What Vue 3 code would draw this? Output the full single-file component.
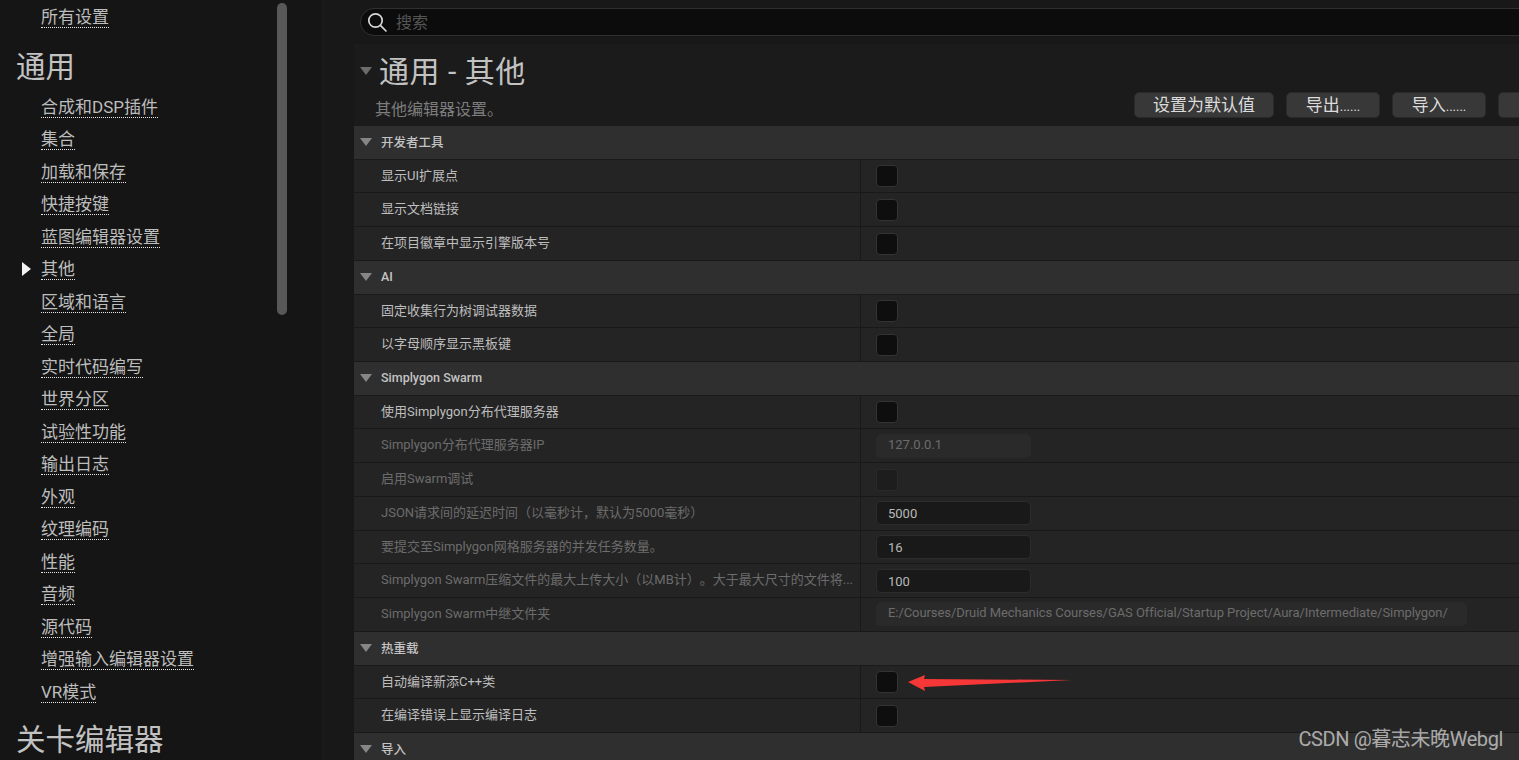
<script setup>
const nav = ['合成和DSP插件','集合','加载和保存','快捷按键','蓝图编辑器设置','其他','区域和语言','全局','实时代码编写','世界分区','试验性功能','输出日志','外观','纹理编码','性能','音频','源代码','增强输入编辑器设置','VR模式']
const sections = [
  { title: '开发者工具', rows: [
    { label: '显示UI扩展点', type: 'check' },
    { label: '显示文档链接', type: 'check' },
    { label: '在项目徽章中显示引擎版本号', type: 'check' }
  ]},
  { title: 'AI', rows: [
    { label: '固定收集行为树调试器数据', type: 'check' },
    { label: '以字母顺序显示黑板键', type: 'check' }
  ]},
  { title: 'Simplygon Swarm', rows: [
    { label: '使用Simplygon分布代理服务器', type: 'check' },
    { label: 'Simplygon分布代理服务器IP', type: 'text', value: '127.0.0.1', dim: true, off: true },
    { label: '启用Swarm调试', type: 'check', dim: true, off: true },
    { label: 'JSON请求间的延迟时间（以毫秒计，默认为5000毫秒）', type: 'text', value: '5000', dim: true },
    { label: '要提交至Simplygon网格服务器的并发任务数量。', type: 'text', value: '16', dim: true },
    { label: 'Simplygon Swarm压缩文件的最大上传大小（以MB计）。大于最大尺寸的文件将...', type: 'text', value: '100', dim: true },
    { label: 'Simplygon Swarm中继文件夹', type: 'text', value: 'E:/Courses/Druid Mechanics Courses/GAS Official/Startup Project/Aura/Intermediate/Simplygon/', dim: true, off: true, wide: true }
  ]},
  { title: '热重载', rows: [
    { label: '自动编译新添C++类', type: 'check' },
    { label: '在编译错误上显示编译日志', type: 'check' }
  ]},
  { title: '导入', rows: [] }
]
</script>

<template>
  <div class="app">
    <aside class="side">
      <div class="side-inner">
        <a class="nav-link first"><span>所有设置</span></a>
        <h2 class="group">通用</h2>
        <a v-for="n in nav" :key="n" class="nav-link" :class="{ active: n === '其他' }"><span>{{ n }}</span></a>
        <h2 class="group last">关卡编辑器</h2>
      </div>
      <div class="scroll"></div>
    </aside>
    <main class="main">
      <div class="search-wrap">
        <div class="search">
          <svg class="mag" width="22" height="22" viewBox="0 0 22 22" fill="none" stroke="#d8d8d8" stroke-width="1.7">
            <circle cx="9.5" cy="9.5" r="6.7"/>
            <path d="M14.4 14.4 20 20" stroke-linecap="round"/>
          </svg>
          <span class="ph">搜索</span>
        </div>
      </div>
      <div class="panel">
        <header class="head">
          <div class="head-left">
            <div class="title-line">
              <i class="tri big"></i>
              <h1>通用 - 其他</h1>
            </div>
            <p class="sub">其他编辑器设置。</p>
          </div>
          <div class="btns">
            <button class="b1">设置为默认值</button>
            <button class="b2">导出<small>......</small></button>
            <button class="b2">导入<small>......</small></button>
            <button class="b2">重置</button>
          </div>
        </header>
        <section v-for="s in sections" :key="s.title">
          <div class="sec"><i class="tri"></i><b>{{ s.title }}</b></div>
          <div v-for="r in s.rows" :key="r.label" class="row">
            <div class="lbl" :class="{ dim: r.dim }">{{ r.label }}</div>
            <div class="val">
              <span v-if="r.type === 'check'" class="chk" :class="{ off: r.off }"></span>
              <span v-else class="inp" :class="{ off: r.off, wide: r.wide }">{{ r.value }}</span>
            </div>
          </div>
        </section>
      </div>
    </main>
    <svg class="arrow" width="170" height="20" viewBox="0 0 170 20">
      <polygon points="0,8 17,1 16,5 164,6 16,13 17,17" fill="#f63737"/>
    </svg>
    <div class="mark">CSDN @暮志未晚Webgl</div>
  </div>
</template>

<style>
html, body { margin: 0; background: #151515; overflow: hidden; }
</style>

<style scoped>
.app {
  position: relative;
  display: flex;
  width: 1519px;
  height: 760px;
  overflow: hidden;
  background: #181818;
  font-family: Roboto, "Noto Sans CJK SC", sans-serif;
  text-spacing-trim: space-all;
}
.side {
  position: relative;
  width: 322px;
  flex: none;
  background: #151515;
  border-right: 1px solid #1b1b1b;
}
.side-inner { padding-left: 41px; }
.nav-link {
  position: relative;
  display: block;
  height: 32.5px;
  line-height: 32px;
  font-size: 17px;
  color: #bdbdbd;
}
.nav-link.first { margin-top: 1px; }
.nav-link span {
  display: inline-block;
  line-height: 19px;
  border-bottom: 1px dotted #e8e8e8;
}
.nav-link.active::before {
  content: '';
  position: absolute;
  left: -19px;
  top: 9px;
  border-left: 9px solid #f2f2f2;
  border-top: 7px solid transparent;
  border-bottom: 7px solid transparent;
}
.group {
  margin: 0 0 0 -25px;
  height: 49px;
  line-height: 50px;
  padding-top: 8px;
  font-size: 29.5px;
  font-weight: 400;
  color: #c2c2c2;
}
.group.last { padding-top: 7px; }
.scroll {
  position: absolute;
  left: 277px;
  top: 3px;
  width: 10px;
  height: 312px;
  border-radius: 5px;
  background: #585858;
}
.main {
  margin-left: 31px;
  flex: 1;
  min-width: 0;
  overflow: hidden;
}
.search-wrap {
  height: 44px;
  margin-left: -33px;
  background: #181818;
  padding: 8px 0 0 39px;
  box-sizing: border-box;
}
.search {
  display: flex;
  align-items: center;
  height: 28px;
  width: 1300px;
  box-sizing: border-box;
  border: 1px solid #303030;
  border-radius: 14px;
  background: #0c0c0c;
  padding-left: 5px;
}
.mag { flex: none; }
.ph {
  margin-left: 8px;
  margin-bottom: 2px;
  font-size: 16px;
  color: #555;
}
.panel { width: 1300px; }
.head {
  display: flex;
  height: 82px;
  background: #1b1b1b;
}
.head-left { width: 780px; flex: none; }
.title-line {
  display: flex;
  align-items: center;
  height: 54px;
}
h1 {
  margin: -4px 0 0 7px;
  font-size: 30px;
  font-weight: 400;
  color: #c2c2c2;
  letter-spacing: 0.5px;
}
.tri {
  display: block;
  width: 0;
  height: 0;
  margin-left: 6px;
  border-top: 8px solid #868686;
  border-left: 6.5px solid transparent;
  border-right: 6.5px solid transparent;
}
.tri.big { border-top-color: #6c6c6c; }
.sub {
  margin: 1px 0 0 21px;
  font-size: 16px;
  line-height: 22px;
  color: #7d7d7d;
}
.btns {
  display: flex;
  gap: 12px;
  padding-top: 48px;
}
button {
  flex: none;
  height: 26px;
  padding: 0;
  border: 1px solid #2a2a2a;
  border-radius: 5px;
  background: #383838;
  color: #dcdcdc;
  font: 400 17px/24px Roboto, "Noto Sans CJK SC", sans-serif;
}
button small { font-size: 13px; }
.b1 { width: 140px; }
.b2 { width: 94px; }
.sec {
  display: flex;
  align-items: center;
  height: 33.72px;
  box-sizing: border-box;
  padding-bottom: 1px;
  background: #2f2f2f;
  border-bottom: 1px solid #1a1a1a;
}
.sec b {
  margin-left: 9px;
  font-size: 12.5px;
  font-weight: 500;
  color: #c4c4c4;
}
.row {
  display: flex;
  height: 33.72px;
  box-sizing: border-box;
  background: #242424;
  border-bottom: 1px solid #191919;
}
.lbl {
  width: 507px;
  flex: none;
  box-sizing: border-box;
  padding-left: 27px;
  line-height: 32.4px;
  font-size: 13px;
  color: #bebebe;
  white-space: nowrap;
  overflow: hidden;
  border-right: 1px solid #191919;
}
.lbl.dim { color: #6c6c6c; }
.val {
  display: flex;
  align-items: center;
  padding-left: 15px;
}
.chk {
  display: block;
  width: 22px;
  height: 22px;
  box-sizing: border-box;
  border: 1px solid #333;
  border-radius: 4px;
  background: #0e0e0e;
}
.chk.off { background: #1d1d1d; border-color: #2a2a2a; }
.inp {
  display: block;
  width: 155px;
  height: 24px;
  box-sizing: border-box;
  padding-left: 11px;
  border: 1px solid #2c2c2c;
  border-radius: 5px;
  background: #191919;
  color: #b8b8b8;
  font-size: 13px;
  line-height: 23px;
  white-space: nowrap;
}
.inp.off { background: #2a2a2a; border-color: #2a2a2a; color: #6c6c6c; line-height: 19px; }
.inp.wide { width: 591px; letter-spacing: -0.07px; }
.arrow {
  position: absolute;
  left: 908px;
  top: 674px;
}
.mark {
  position: absolute;
  right: 16px;
  top: 725px;
  font-family: Roboto, "Noto Sans CJK SC", sans-serif;
  font-size: 20px;
  letter-spacing: -0.4px;
  line-height: 28px;
  color: rgba(255, 255, 255, 0.62);
  white-space: nowrap;
}
</style>
